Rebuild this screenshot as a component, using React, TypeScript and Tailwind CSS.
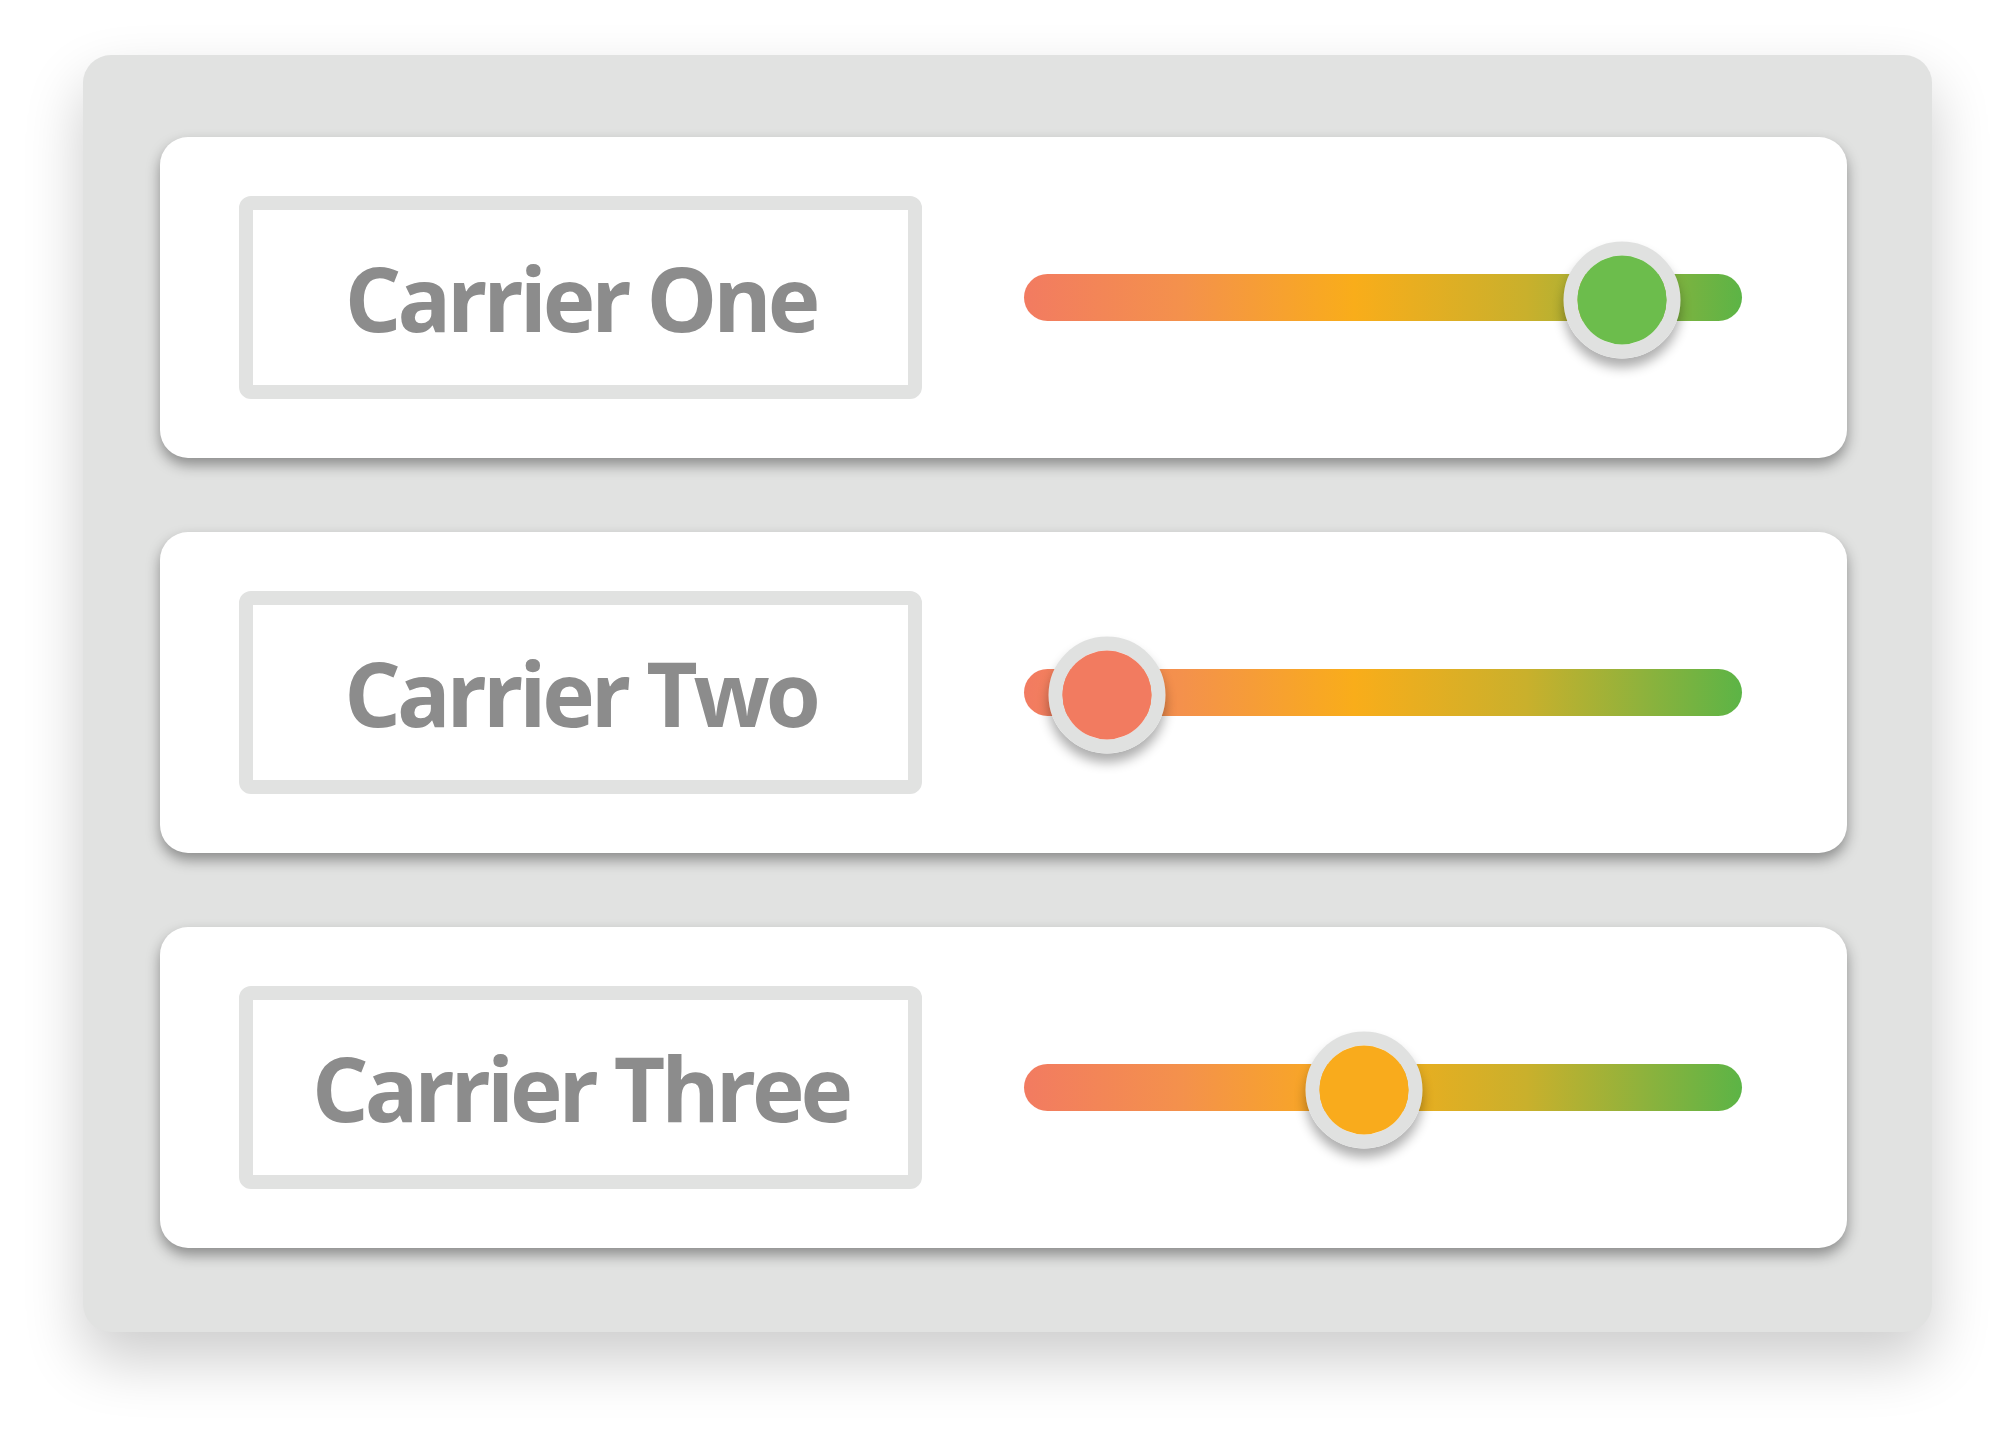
import React from 'react';

interface Carrier {
    name: string;
    value: number;
    knob: string;
}

const carriers: Carrier[] = [
    { name: 'Carrier One', value: 0.833, knob: 'bg-[#6cbd4c]' },
    { name: 'Carrier Two', value: 0.116, knob: 'bg-[#f27b60]' },
    { name: 'Carrier Three', value: 0.474, knob: 'bg-[#f9ab1c]' },
];

const RatingSlider = ({ value, knob }: { value: number; knob: string }) => (
    <div className="relative h-[47px] flex-1 rounded-full bg-[linear-gradient(90deg,#f27b61_0%,#f4914c_22%,#f9ad1a_46%,#c9b02c_70%,#8fb23c_86%,#5cb446_100%)]">
        <div
            className="absolute top-1/2 h-[117px] w-[117px] -translate-x-1/2 -translate-y-1/2 mt-[2px] rounded-full border-[14px] border-[#e0e1e0] shadow-[0_9px_12px_rgba(0,0,0,0.32)]"
            style={{ left: `${value * 100}%` }}
        >
            <div className={`h-full w-full rounded-full ${knob}`} />
        </div>
    </div>
);

const App = () => {
    return (
        <div className="min-h-[1443px] w-[2015px] bg-white pl-[83px] pt-[55px] font-['Open_Sans',sans-serif]">
            <div className="flex w-[1849px] flex-col gap-[74px] rounded-[28px] bg-[#e1e2e1] pb-[84px] pl-[77px] pr-[85px] pt-[82px] shadow-[0_28px_60px_rgba(0,0,0,0.2)]">
                {carriers.map((carrier) => (
                    <div
                        key={carrier.name}
                        className="flex h-[321px] items-center gap-[102px] rounded-[28px] bg-white pl-[79px] pr-[105px] shadow-[0_7px_14px_rgba(0,0,0,0.38)]"
                    >
                        <div className="flex h-[203px] w-[683px] items-center justify-center rounded-[12px] border-[14px] border-[#e1e2e1]">
                            <span className="text-[89px] font-bold leading-none tracking-[-0.046em] text-[#8c8c8c]">
                                {carrier.name}
                            </span>
                        </div>
                        <RatingSlider value={carrier.value} knob={carrier.knob} />
                    </div>
                ))}
            </div>
        </div>
    );
};

export default App;
